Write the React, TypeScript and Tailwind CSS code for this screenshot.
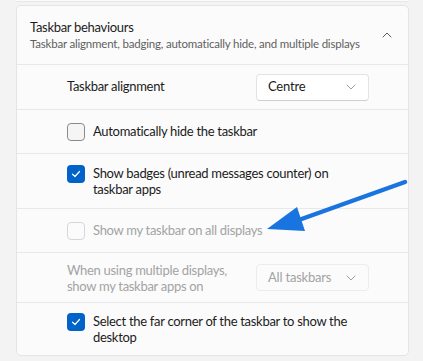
import { JSX } from "react";

const font = { fontFamily: '"Segoe UI", Lato, "Liberation Sans", sans-serif' };

const Check = ({ checked, disabled }: { checked?: boolean; disabled?: boolean }) =>
  checked ? (
    <span className="w-[18px] h-[18px] shrink-0 rounded-[4px] bg-[#0063c9] flex items-center justify-center">
      <svg width="10" height="10" viewBox="0 0 10 10" fill="none">
        <path d="M1.5 5.2 L4 7.5 L8.5 2.5" stroke="white" strokeWidth="1.2" strokeLinecap="round" strokeLinejoin="round" />
      </svg>
    </span>
  ) : (
    <span
      className={`w-[18px] h-[18px] shrink-0 rounded-[4px] border ${
        disabled ? "border-[#d6d6d6] bg-[#fbfbfb]" : "border-[#8a8a8a] bg-[#f5f5f5]"
      }`}
    />
  );

const Chevron = ({ up, light }: { up?: boolean; light?: boolean }) => (
  <svg width="10" height="6" viewBox="0 0 10 6" fill="none" className={up ? "rotate-180" : ""}>
    <path d="M1 1 L5 5 L9 1" stroke={light ? "#a0a0a0" : "#5a5a5a"} strokeWidth="1" strokeLinecap="round" strokeLinejoin="round" />
  </svg>
);

const Select = ({ label, disabled }: { label: string; disabled?: boolean }) => (
  <div
    className={`w-[113px] h-[27px] rounded-[4px] border flex items-center justify-between pl-[11px] pr-[12px] text-[13px] tracking-[-0.2px] ${
      disabled
        ? "border-[#ececec] bg-[#fbfbfb] text-[#a3a3a3]"
        : "border-[#e3e3e3] border-b-[#cfcfcf] bg-white text-[#1b1b1b]"
    }`}
  >
    <span>{label}</span>
    <Chevron light />
  </div>
);

const CheckRow = ({ text, checked, disabled, h }: { text: string; checked?: boolean; disabled?: boolean; h: string }) => (
  <div className={`${h} border-t border-[#e8e8e8] flex items-center pl-[50px]`}>
    <div className="flex items-start gap-[8px]">
      <Check checked={checked} disabled={disabled} />
      <span
        className={`w-[260px] text-[13px] tracking-[-0.3px] leading-[16px] ${disabled ? "text-[#a3a3a3]" : "text-[#1b1b1b]"}`}
      >
        {text}
      </span>
    </div>
  </div>
);

export default function App(): JSX.Element {
  return (
    <div className="w-[423px] h-[361px] bg-[#f3f3f3] relative overflow-hidden" style={font}>
      <div className="ml-[16px] mr-[14px] h-[2px] bg-[#fbfbfb] border-b border-[#e8e8e8]" />
      <div className="ml-[16px] mr-[14px] mt-[3px] bg-[#fbfbfb] border border-[#e5e5e5] rounded-[5px] overflow-hidden">
        {/* Header */}
        <div className="h-[58px] flex items-center justify-between pl-[13px] pr-[16px]">
          <div className="flex flex-col">
            <span className="text-[13px] tracking-[-0.3px] leading-[17px] text-[#1b1b1b]">Taskbar behaviours</span>
            <span className="text-[11.5px] tracking-[-0.2px] leading-[16px] text-[#5f5f5f] whitespace-nowrap">
              Taskbar alignment, badging, automatically hide, and multiple displays
            </span>
          </div>
          <Chevron up />
        </div>

        {/* Alignment */}
        <div className="h-[45px] border-t border-[#e8e8e8] flex items-center justify-between pl-[50px] pr-[39px]">
          <span className="text-[13px] tracking-[-0.3px] text-[#1b1b1b]">Taskbar alignment</span>
          <Select label="Centre" />
        </div>

        <CheckRow h="h-[44px]" text="Automatically hide the taskbar" />
        <CheckRow h="h-[55px]" checked text="Show badges (unread messages counter) on taskbar apps" />
        <CheckRow h="h-[44px]" disabled text="Show my taskbar on all displays" />

        <div className="h-[50px] border-t border-[#e8e8e8] flex items-center justify-between pl-[50px] pr-[39px]">
          <span className="text-[13px] tracking-[-0.3px] leading-[16px] text-[#a3a3a3] w-[175px]">
            When using multiple displays, show my taskbar apps on
          </span>
          <Select label="All taskbars" disabled />
        </div>

        <CheckRow h="h-[53px]" checked text="Select the far corner of the taskbar to show the desktop" />
      </div>

      {/* Annotation arrow */}
      <svg className="absolute left-0 top-0 pointer-events-none" width="423" height="361" viewBox="0 0 423 361">
        <line x1="405" y1="182" x2="296" y2="221" stroke="#1a74df" strokeWidth="4.5" strokeLinecap="round" />
        <polygon points="267,229 297,207 305,231" fill="#1a74df" />
      </svg>
    </div>
  );
}
